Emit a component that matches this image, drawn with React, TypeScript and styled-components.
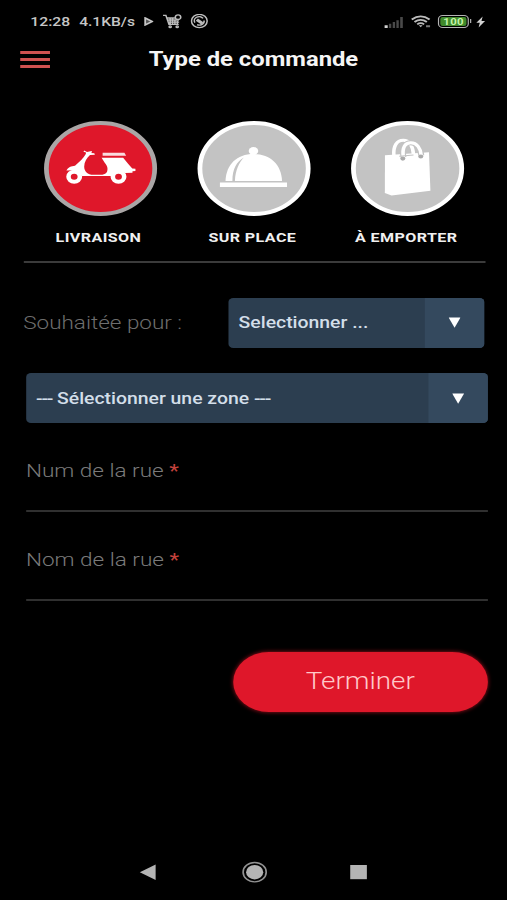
import React from "react";
import styled, { createGlobalStyle } from "styled-components";

const GlobalStyle = createGlobalStyle`
  html, body { margin: 0; background: #000; overflow: hidden; }
  * { box-sizing: border-box; }
`;

const Screen = styled.div`
  width: 426px;
  height: 900px;
  display: flex;
  flex-direction: column;
  transform: scaleX(1.19);
  transform-origin: 0 0;
  background: #000;
  color: #fff;
  font-family: Roboto, sans-serif;
  overflow: hidden;
`;

const StatusBar = styled.header`
  height: 42px;
  padding: 1px 18.5px 0 25.5px;
  display: flex;
  align-items: center;
  color: #c6c6c6;
  font-size: 13.1px;
  font-weight: 500;
  line-height: 42px;
  svg { display: block; flex: none; }
`;

const Clock = styled.span`
  width: 41px;
  font-size: 13.2px;
`;

const Speed = styled.span`
  width: 54.4px;
`;

const StatusIcons = styled.div<{ $gap: number }>`
  display: flex;
  align-items: center;
  gap: ${(p) => p.$gap}px;
`;

const Spacer = styled.div`
  flex: 1;
`;

const Battery = styled.div`
  position: relative;
  width: 26px;
  height: 12.5px;
  padding: 1px;
  border: 1.4px solid #b5b5b5;
  border-radius: 4px;
  &::after {
    content: "";
    position: absolute;
    right: -3px;
    top: 3px;
    width: 1.6px;
    height: 4px;
    background: #b5b5b5;
  }
`;

const Charge = styled.div`
  height: 100%;
  border-radius: 2px;
  background: #3f8a2b;
  color: #c4f3a8;
  font-size: 9.5px;
  font-weight: 700;
  line-height: 9px;
  text-align: center;
  letter-spacing: 0.3px;
`;

const TitleBar = styled.div`
  height: 36px;
  padding: 0 16.5px;
  display: grid;
  grid-template-columns: 25px 1fr 25px;
  align-items: center;
`;

const MenuButton = styled.button`
  display: flex;
  flex-direction: column;
  gap: 4px;
  padding: 0;
  margin-top: -1px;
  border: 0;
  background: none;
`;

const MenuLine = styled.span`
  height: 3px;
  background: #d05250;
`;

const Title = styled.h1`
  margin: -3px 0 0;
  font-size: 20px;
  line-height: 24px;
  font-weight: 700;
  text-align: center;
  color: #f5f5f5;
`;

const OrderTypes = styled.nav`
  width: 388px;
  height: 184.5px;
  margin-left: 19.5px;
  padding-top: 43px;
  display: grid;
  grid-template-columns: repeat(3, 129.3px);
  border-bottom: 2px solid #3b3b3b;
`;

const OrderType = styled.div`
  display: flex;
  flex-direction: column;
  align-items: center;
`;

const Disc = styled.div<{ $active?: boolean }>`
  width: 95px;
  height: 95px;
  border: 4.6px solid ${(p) => (p.$active ? "#aaa6a6" : "#fff")};
  border-radius: 50%;
  background: ${(p) => (p.$active ? "#df172a" : "#c3c3c3")};
  svg { display: block; margin: -4px; }
`;

const TypeLabel = styled.span`
  margin: 14px 2.8px 0 0;
  font-size: 13.5px;
  line-height: 15px;
  font-weight: 700;
  letter-spacing: 0.35px;
  white-space: nowrap;
  color: #f0f0f0;
`;

const WishRow = styled.div`
  height: 50px;
  margin: 35px 18.7px 0 19.5px;
  display: flex;
  align-items: center;
  justify-content: space-between;
`;

const WishLabel = styled.span`
  font-size: 18.9px;
  font-weight: 300;
  color: #6e6e6e;
`;

const Select = styled.div<{ $width: number }>`
  width: ${(p) => p.$width}px;
  height: 50px;
  display: flex;
  align-items: center;
  justify-content: space-between;
  border-radius: 4px;
  overflow: hidden;
  background: #2c3e50;
`;

const Value = styled.span`
  padding-left: 8.5px;
  font-size: 16.3px;
  font-weight: 500;
  color: #d3dee9;
  white-space: nowrap;
`;

const Dashes = styled.span`
  letter-spacing: -1px;
`;

const Arrow = styled.div`
  width: 50px;
  height: 100%;
  display: grid;
  place-items: center;
  background: #34495e;
`;

const Form = styled.form`
  margin: 25.5px 0 0 21.8px;
  width: 388px;
  display: flex;
  flex-direction: column;
`;

const Field = styled.label`
  height: 89px;
  padding-top: 36.5px;
  border-bottom: 2px solid #303030;
  font-size: 18.95px;
  line-height: 22px;
  font-weight: 300;
  color: #7a7a7a;
`;

const Required = styled.span`
  color: #c4423c;
  font-weight: 400;
`;

const Submit = styled.button`
  width: 214px;
  height: 60px;
  margin-top: 51px;
  padding: 0 0 2px;
  align-self: flex-end;
  border: 0;
  border-radius: 30px;
  background: #df172a;
  box-shadow: 0 0 4px rgba(223, 23, 42, 0.75);
  font: 300 23.4px Roboto, sans-serif;
  color: #ffc9c9;
`;

const NavBar = styled.footer`
  height: 56px;
  display: flex;
  justify-content: center;
  align-items: center;
  svg { display: block; margin-right: 0.8px; }
`;

const PlayIcon = () => (
  <svg width="8" height="9" viewBox="0 0 8 9">
    <path d="M1 1 L7 4.5 L1 8 Z" fill="#555" stroke="#c6c6c6" strokeWidth="1.5" />
  </svg>
);

const CartIcon = () => (
  <svg width="16" height="15" viewBox="0 0 16 15" fill="none" stroke="#bdbdbd" strokeWidth="1.3">
    <path d="M0 1.4h2.4L5 10.4h8.2M3 4h7M3.5 6h9.8M4.2 8.2h9.3M6 4v6M8 4v6M10 6v4M12 7v3" />
    <circle cx="12.6" cy="3.2" r="2.3" />
    <circle cx="6" cy="12.7" r="0.9" />
    <circle cx="11.9" cy="12.7" r="0.9" />
  </svg>
);

const EyeIcon = () => (
  <svg width="15" height="15" viewBox="0 0 15 15" fill="none" stroke="#bdbdbd">
    <circle cx="7.5" cy="7" r="6.6" strokeWidth="1.3" />
    <path d="M3.8 8.6A4 4 0 0 1 10.6 4.4M11.5 6.5A4 4 0 0 1 5.6 10.6" strokeWidth="1.3" />
    <path d="M5.4 5.6l4.6 3.8" strokeWidth="2.8" />
  </svg>
);

const SignalIcon = () => (
  <svg width="17" height="12" viewBox="0 0 17 12">
    <path d="M0 9.3h2.8V12H0z" fill="#d2d2d2" />
    <path d="M3.8 7.8h2V12h-2zM7 6h2v6H7zM10.1 4.2h2V12h-2zM13.3 1h2.2v11h-2.2z" fill="#494949" />
  </svg>
);

const WifiIcon = () => (
  <svg width="18" height="13" viewBox="0 0 18 13" fill="none" stroke="#bcbcbc" strokeWidth="1.7">
    <path d="M1 4.5Q8.5-1.8 16 4.5M3.3 7Q8.5 2.7 13.7 7M5.6 9.3Q8.5 7 11.4 9.3" />
    <path d="M6.9 10.2h3.2L8.5 12.2z" fill="#bcbcbc" stroke="none" />
    <path d="M13 11.2h3.4" stroke="#777" strokeWidth="2" />
  </svg>
);

const BoltIcon = () => (
  <svg width="8" height="12" viewBox="0 0 8 12">
    <path d="M5.6 0.5L0.3 6.7h2.9L2.2 11.5L7.6 5H4.6z" fill="#d2d2d2" />
  </svg>
);

const ScooterIcon = () => (
  <svg width="94" height="94" viewBox="0 0 94 94" fill="#fff">
    <g transform="translate(.9 .4) scale(.955 1)">
      <path d="M34.3 29.2l2.6 1.3 4-1 .5 1.3-1.3.9 3.2.2.5 1.5-4.3.3c-3 3.2-5 7.2-5.1 11.4-.1 4.8 3 8.3 8.1 8.3h6.2c5 0 6.2-2.5 6.2-6 0-2.6-1.2-4.4-2.6-6.4l-2.6-4.6h19c3 4.2 5.4 7.6 8 10.7l2.8.2v2.2l-2.6.3v1.5l-6.6.2c-3.4-2.2-8.6-1.3-10 3H32.3c-1.8-2.7-3.8-5.3-7.6-5.6l-5.9.3c1.2-3.3 4.3-4.5 7.5-4.8 4-4 7.5-7.6 9.5-11.8l.2-1.4-2.2-.9z" />
      <path d="M50.6 31.4h19.2l1.5 3H50.6z" opacity=".85" />
      <circle cx="25.6" cy="55.4" r="5" fill="#df172a" stroke="#fff" strokeWidth="4" />
      <circle cx="64.6" cy="55.4" r="5" fill="#df172a" stroke="#fff" strokeWidth="4" />
    </g>
  </svg>
);

const ClocheIcon = () => (
  <svg width="94" height="94" viewBox="0 0 94 94" fill="#fff">
    <circle cx="47" cy="30" r="4" />
    <path d="M23.5 60C24 43.5 33 33 47 33S70.5 43.5 71 60z" />
    <path d="M18.8 61.4h56.4v4.6H18.8z" />
    <path d="M29.3 60c0-12 3.6-19.3 9.6-23.4-4 5.5-7 12-7.5 23.4z" fill="#c3c3c3" />
  </svg>
);

const BagIcon = () => (
  <svg width="94" height="94" viewBox="0 0 94 94">
    <path d="M28.5 34.2l37-3L66.7 69.8L34 74.4L28.4 72z" fill="#fff" />
    <path d="M36 35C35.3 24.5 38.5 19.2 44 19.3C48.8 19.4 51.8 25 52.5 33.5" fill="none" stroke="#fff" strokeWidth="3" />
    <path d="M44 36.2C42.7 26 45.6 21.8 50.2 21.8C55.4 21.8 58.6 27.5 59 34.5" fill="none" stroke="#c3c3c3" strokeWidth="5" />
    <path d="M44 36.2C42.7 26 45.6 21.8 50.2 21.8C55.4 21.8 58.6 27.5 59 34.5" fill="none" stroke="#fff" strokeWidth="3" />
    <path d="M40.5 35.2l12-1.2" stroke="#c3c3c3" strokeWidth="1" />
    <circle cx="43.5" cy="37.6" r="2.1" fill="#aaa" />
    <circle cx="58.6" cy="35.5" r="2.1" fill="#aaa" />
  </svg>
);

const ArrowIcon = () => (
  <svg width="10" height="11" viewBox="0 0 10 11">
    <path d="M0 0.5h10L5 10.8z" fill="#fff" />
  </svg>
);

const NavIcons = () => (
  <svg width="194" height="24" viewBox="0 0 194 24" fill="#b4b4b4">
    <path d="M1.5 12.2L14.8 4.5V20z" />
    <circle cx="98" cy="12.2" r="9.7" fill="none" stroke="#929292" strokeWidth="1.4" />
    <circle cx="98" cy="12.2" r="7.2" />
    <path d="M178.3 5h14v14.2h-14z" />
  </svg>
);

export default function App() {
  return (
    <>
      <GlobalStyle />
      <Screen>
        <StatusBar>
          <Clock>12:28</Clock>
          <Speed>4.1KB/s</Speed>
          <StatusIcons $gap={7.8}>
            <PlayIcon />
            <CartIcon />
            <EyeIcon />
          </StatusIcons>
          <Spacer />
          <StatusIcons $gap={5.3}>
            <SignalIcon />
            <WifiIcon />
            <Battery>
              <Charge>100</Charge>
            </Battery>
            <BoltIcon />
          </StatusIcons>
        </StatusBar>
        <TitleBar>
          <MenuButton aria-label="Menu">
            <MenuLine />
            <MenuLine />
            <MenuLine />
          </MenuButton>
          <Title>Type de commande</Title>
        </TitleBar>
        <OrderTypes>
          <OrderType>
            <Disc $active>
              <ScooterIcon />
            </Disc>
            <TypeLabel>LIVRAISON</TypeLabel>
          </OrderType>
          <OrderType>
            <Disc>
              <ClocheIcon />
            </Disc>
            <TypeLabel>SUR PLACE</TypeLabel>
          </OrderType>
          <OrderType>
            <Disc>
              <BagIcon />
            </Disc>
            <TypeLabel>À EMPORTER</TypeLabel>
          </OrderType>
        </OrderTypes>
        <WishRow>
          <WishLabel>Souhaitée pour :</WishLabel>
          <Select $width={215.3}>
            <Value>Selectionner ...</Value>
            <Arrow>
              <ArrowIcon />
            </Arrow>
          </Select>
        </WishRow>
        <Form>
          <Select $width={388}>
            <Value>
              <Dashes>---</Dashes> Sélectionner une zone <Dashes>---</Dashes>
            </Value>
            <Arrow>
              <ArrowIcon />
            </Arrow>
          </Select>
          <Field>
            Num de la rue <Required>*</Required>
          </Field>
          <Field>
            Nom de la rue <Required>*</Required>
          </Field>
          <Submit type="button">Terminer</Submit>
        </Form>
        <Spacer />
        <NavBar>
          <NavIcons />
        </NavBar>
      </Screen>
    </>
  );
}
